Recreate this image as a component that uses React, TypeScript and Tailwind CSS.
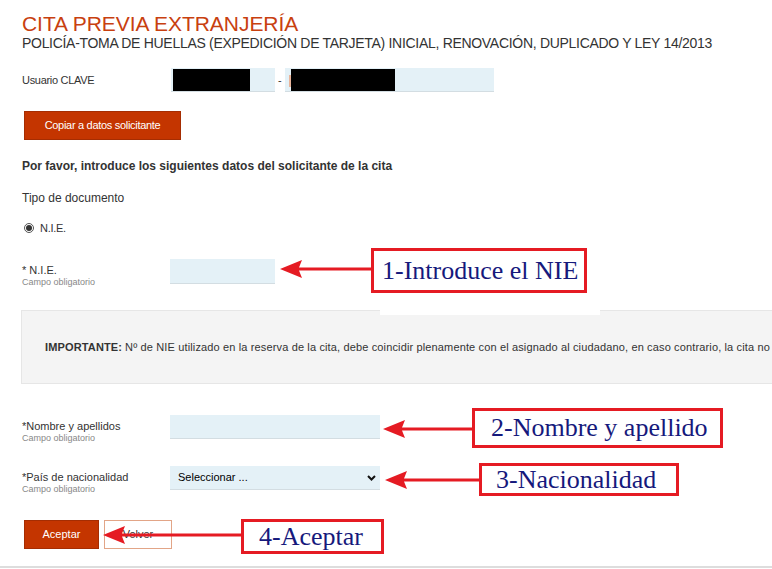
const arrowRed = "#e51b23"

function Arrow({ x1, x2, y }: { x1: number; x2: number; y: number }) {
  // x1 = tip, x2 = tail (box edge)
  const w = x2 - x1
  return (
    <svg
      className="absolute"
      style={{ left: x1, top: y - 10 }}
      width={w}
      height={20}
      viewBox={`0 0 ${w} 20`}
    >
      <polygon points={`0,10 22,1 19,8.5 ${w},8.5 ${w},11.5 19,11.5 22,19`} fill={arrowRed} />
    </svg>
  )
}

function Note({
  left,
  top,
  width,
  height,
  pl,
  children,
}: {
  left: number
  top: number
  width: number
  height: number
  pl: number
  children: string
}) {
  return (
    <div
      className="absolute flex items-center border-[3px] border-[#e51b23] bg-white font-['Liberation_Serif',serif] text-[26px] leading-none whitespace-nowrap text-[#16197c]"
      style={{ left, top, width, height, paddingLeft: pl }}
    >
      {children}
    </div>
  )
}

function FieldLabel({ label }: { label: string }) {
  return (
    <div className="w-[148px] pt-[5px]">
      <div className="text-[11px] leading-[13px] text-[#333]">{label}</div>
      <div className="text-[9px] leading-[11px] text-[#888]">Campo obligatorio</div>
    </div>
  )
}

export default function App() {
  return (
    <div className="relative w-[772px] h-[569px] overflow-hidden bg-white font-['Liberation_Sans',Arial,sans-serif] text-[#333]">
      <div className="pl-[22px] pt-[12px]">
        <h1 className="text-[21px] leading-[24px] tracking-[-0.05px] text-[#c8400f]">CITA PREVIA EXTRANJERÍA</h1>
        <p className="text-[14px] leading-[14px] tracking-[-0.3px] whitespace-nowrap text-[#333]">
          POLICÍA-TOMA DE HUELLAS (EXPEDICIÓN DE TARJETA) INICIAL, RENOVACIÓN, DUPLICADO Y LEY 14/2013
        </p>

        <div className="mt-[18px] flex items-center h-[24px]">
          <div className="w-[149px] text-[11px] tracking-[-0.3px]">Usuario CLAVE</div>
          <div className="h-[24px] w-[104px] bg-[#e4f1f7] border-b border-[#d3dde2] pl-[2px] pt-[1px]">
            <div className="h-[22px] w-[77px] bg-black" />
          </div>
          <span className="mx-[3px] text-[11px]">-</span>
          <div className="flex h-[24px] w-[209px] bg-[#e4f1f7] border-b border-[#d3dde2] pl-[4px] pt-[1px]">
            <span className="w-[2px] h-[12px] mt-[6px] bg-[#e9b49a]" />
            <div className="h-[22px] w-[104px] bg-black" />
          </div>
        </div>

        <button className="mt-[19px] ml-[2px] h-[29px] w-[157px] bg-[#c43500] border border-[#a52d02] text-[11px] tracking-[-0.3px] text-white">
          Copiar a datos solicitante
        </button>

        <p className="mt-[18px] text-[12px] leading-[16px] font-bold">
          Por favor, introduce los siguientes datos del solicitante de la cita
        </p>
        <p className="mt-[16px] text-[12px] leading-[16px]">Tipo de documento</p>

        <div className="mt-[14px] flex items-center h-[16px] pl-[2px]">
          <span className="flex items-center justify-center w-[10px] h-[10px] rounded-full border border-[#555] bg-white">
            <span className="w-[6px] h-[6px] rounded-full bg-[#333]" />
          </span>
          <span className="ml-[6px] text-[11px] tracking-[-0.3px]">N.I.E.</span>
        </div>

        <div className="mt-[23px] flex h-[25px]">
          <FieldLabel label="* N.I.E." />
          <div className="h-[25px] w-[105px] bg-[#e4f1f7] border-b border-[#d3dde2]" />
        </div>

        <div className="mt-[26px] -ml-[1px] w-[900px] h-[74px] flex items-center pl-[23px] bg-[#f4f4f4] border border-[#e6e6e6] text-[11px] tracking-[0.14px] whitespace-nowrap">
          <b className="text-[#333]">IMPORTANTE:</b>
          <span className="ml-[3px]">
            Nº de NIE utilizado en la reserva de la cita, debe coincidir plenamente con el asignado al ciudadano, en caso contrario, la cita no
          </span>
        </div>

        <div className="mt-[31px] flex h-[24px]">
          <FieldLabel label="*Nombre y apellidos" />
          <div className="h-[24px] w-[210px] bg-[#e4f1f7] border-b border-[#d3dde2]" />
        </div>

        <div className="mt-[27px] flex h-[24px]">
          <FieldLabel label="*País de nacionalidad" />
          <div className="h-[24px] w-[210px] flex items-center justify-between bg-[#e4f1f7] border-b border-[#d3dde2] pl-[8px] pr-[4px] text-[11px] text-black">
            <span>Seleccionar ...</span>
            <svg width="9" height="6" viewBox="0 0 9 6">
              <polyline points="1,1 4.5,4.5 8,1" fill="none" stroke="#111" strokeWidth="2" />
            </svg>
          </div>
        </div>

        <div className="mt-[30px] flex gap-[5px] pl-[2px]">
          <button className="h-[29px] w-[75px] bg-[#c43500] border border-[#a52d02] text-[11px] text-white">
            Aceptar
          </button>
          <button className="h-[29px] w-[68px] bg-white border border-[#e2a587] text-[11px] text-[#333]">
            Volver
          </button>
        </div>
      </div>

      <div className="absolute left-0 right-0 bottom-[1px] h-[2px] bg-[#dddddd]" />

      {/* annotations pasted over the form */}
      <div className="absolute left-[380px] top-[308px] w-[220px] h-[7px] bg-white" />
      <Note left={371} top={248} width={216} height={45} pl={8}>1-Introduce el NIE</Note>
      <Arrow x1={280} x2={372} y={269} />

      <Note left={472} top={408} width={251} height={40} pl={16}>2-Nombre y apellido</Note>
      <Arrow x1={383} x2={473} y={429} />

      <Note left={479} top={463} width={200} height={33} pl={14}>3-Nacionalidad</Note>
      <Arrow x1={385} x2={480} y={480} />

      <Note left={241} top={519} width={143} height={35} pl={15}>4-Aceptar</Note>
      <Arrow x1={103} x2={242} y={535} />
    </div>
  )
}
